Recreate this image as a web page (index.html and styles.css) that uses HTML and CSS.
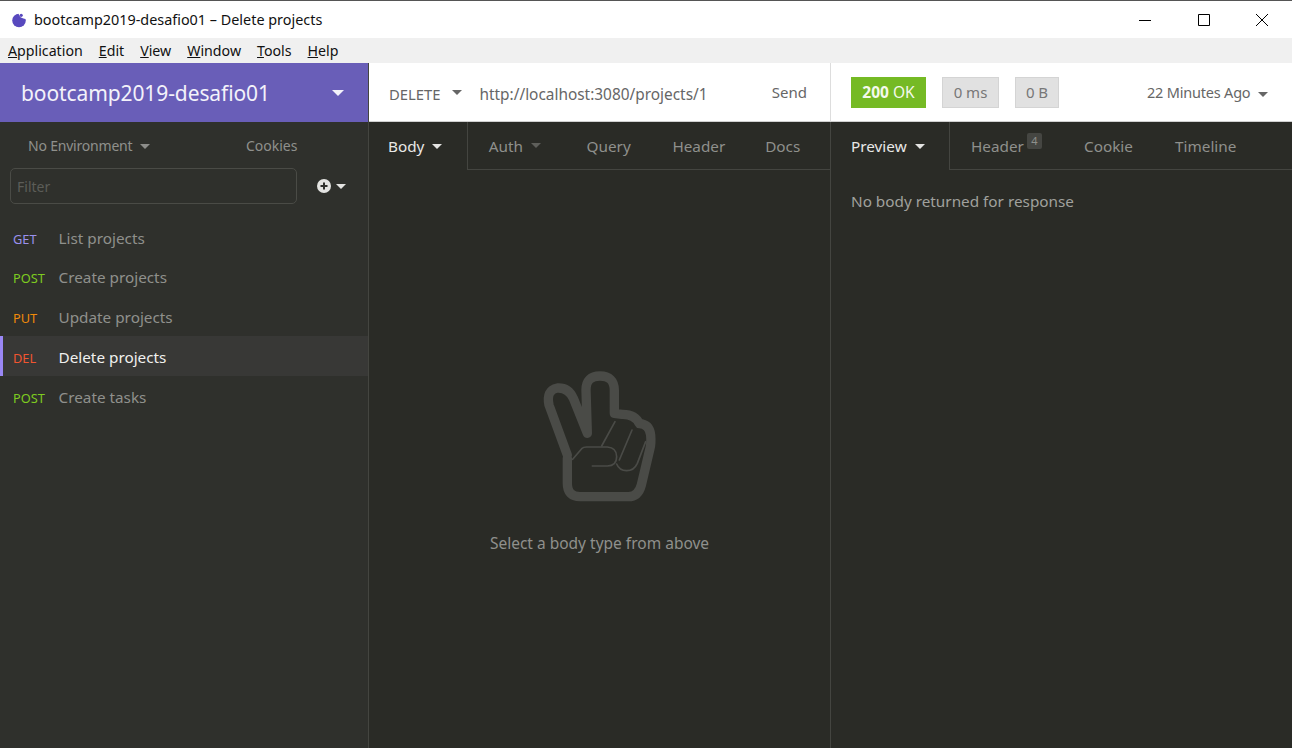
FILE: index.html
```html
<!DOCTYPE html>
<html lang="en">
<head>
<meta charset="UTF-8">
<meta name="viewport" content="width=device-width, initial-scale=1.0">
<title>bootcamp2019-desafio01 – Delete projects</title>
<link rel="stylesheet" href="styles.css">
</head>
<body>

<div class="titlebar">
  <svg class="app-logo" width="16" height="16" viewBox="0 0 16 16">
    <circle cx="8" cy="8.5" r="6.8" fill="#5849be"/>
    <path d="M7.5 1C8 4.5 10 6.5 15 7L15 1z" fill="#fff"/>
    <circle cx="10.2" cy="3.3" r="1.6" fill="#5849be"/>
  </svg>
  <span class="title-text">bootcamp2019-desafio01 – Delete projects</span>
  <div class="win-buttons">
    <svg width="12" height="12" viewBox="0 0 12 12"><path d="M0 6.5h12" stroke="#000" fill="none"/></svg>
    <svg width="12" height="12" viewBox="0 0 12 12"><path d="M.5.5h11v11H.5z" stroke="#000" fill="none"/></svg>
    <svg width="12" height="12" viewBox="0 0 12 12"><path d="M0 0l12 12M12 0L0 12" stroke="#000" fill="none"/></svg>
  </div>
</div>

<div class="menubar">
  <span><u>A</u>pplication</span>
  <span><u>E</u>dit</span>
  <span><u>V</u>iew</span>
  <span><u>W</u>indow</span>
  <span><u>T</u>ools</span>
  <span><u>H</u>elp</span>
</div>

<div class="app">
  <aside class="sidebar">
    <div class="workspace">
      <span>bootcamp2019-desafio01</span>
      <i class="caret caret-big"></i>
    </div>
    <div class="env-row">
      <span class="env">No Environment <i class="caret"></i></span>
      <span class="cookies">Cookies</span>
    </div>
    <div class="filter-row">
      <input class="filter" type="text" placeholder="Filter">
      <svg class="plus" width="14" height="14" viewBox="0 0 14 14">
        <circle cx="7" cy="7" r="7" fill="#e4e4e2"/>
        <path d="M7 3.5v7M3.5 7h7" stroke="#2f302c" stroke-width="2"/>
      </svg>
      <i class="caret caret-white"></i>
    </div>
    <ul class="requests">
      <li><b class="get">GET</b>List projects</li>
      <li><b class="post">POST</b>Create projects</li>
      <li><b class="put">PUT</b>Update projects</li>
      <li class="active"><b class="del">DEL</b>Delete projects</li>
      <li><b class="post">POST</b>Create tasks</li>
    </ul>
  </aside>

  <section class="pane pane-request">
    <div class="topbar">
      <span class="method">DELETE</span>
      <i class="caret caret-dark"></i>
      <span class="url">http://localhost:3080/projects/1</span>
      <span class="send">Send</span>
    </div>
    <div class="tabs">
      <div class="tab current">Body <i class="caret caret-white"></i></div>
      <div class="tab tab-auth">Auth <i class="caret caret-dim"></i></div>
      <div class="tab tab-query">Query</div>
      <div class="tab tab-header">Header</div>
      <div class="tab tab-docs">Docs</div>
      <div class="tab-fill"></div>
    </div>
    <div class="empty">
      <svg class="hand" width="200" height="170" viewBox="0 0 600 510" fill="none" stroke="#4a4b47" stroke-linecap="round" stroke-linejoin="round">
        <path stroke-width="28" d="M202 325L202 400Q202 440 240 440L385 440Q415 440 424 405L450 295Q454 280 452 255Q448 222 418 221Q405 192 366 193L343 190L343 120Q342 78 300 78Q258 78 258 120L262 250L220 145Q205 112 172 114Q138 120 147 165L202 315"/>
        <path stroke-width="5" d="M218 328L245 296Q250 291 260 291L322 291Q350 293 350 320Q350 347 322 348L277 348"/>
        <path stroke-width="5" d="M305 288L345 215"/>
        <path stroke-width="5" d="M358 330L396 240"/>
        <path stroke-width="5" d="M350 342Q358 362 380 362Q402 362 412 340L437 275"/>
      </svg>
      <p>Select a body type from above</p>
    </div>
  </section>

  <section class="pane pane-response">
    <div class="topbar">
      <span class="badge badge-ok"><b>200</b> OK</span>
      <span class="badge badge-ms">0 ms</span>
      <span class="badge badge-size">0 B</span>
      <span class="ago">22 Minutes Ago <i class="caret caret-dark"></i></span>
    </div>
    <div class="tabs">
      <div class="tab current tab-preview">Preview <i class="caret caret-white"></i></div>
      <div class="tab tab-resp-header">Header<sup class="count">4</sup></div>
      <div class="tab tab-cookie">Cookie</div>
      <div class="tab tab-timeline">Timeline</div>
      <div class="tab-fill"></div>
    </div>
    <p class="no-body">No body returned for response</p>
  </section>
</div>

</body>
</html>
```

FILE: styles.css
```css
* {
  box-sizing: border-box;
}

html, body {
  height: 100%;
}

body {
  margin: 0;
  font-family: "Noto Sans", Arial, sans-serif;
  font-size: 14px;
  background-color: #2a2b26;
  display: flex;
  flex-direction: column;
  overflow: hidden;
}

.titlebar {
  height: 38px;
  background-color: white;
  border-top: 1px solid #555;
  display: flex;
  align-items: center;
  padding-left: 11px;
  color: #111;
}

.title-text {
  margin-left: 7px;
  font-size: 14.4px;
}

.win-buttons {
  margin-left: auto;
  display: flex;
  gap: 46.5px;
  padding-right: 24px;
}

.win-buttons svg {
  display: block;
}

.menubar {
  height: 25px;
  background-color: #f0f0f0;
  display: flex;
  align-items: center;
  gap: 16px;
  padding-left: 8px;
  font-size: 14.2px;
  color: #111;
}

.app {
  flex: 1;
  display: flex;
  min-height: 0;
}

.sidebar {
  width: 369px;
  background-color: #2f302c;
  border-right: 1px solid #444540;
  display: flex;
  flex-direction: column;
}

.workspace {
  height: 59px;
  background-color: #695eb8;
  color: #f3f2fa;
  font-size: 21px;
  letter-spacing: -0.1px;
  display: flex;
  align-items: center;
  justify-content: space-between;
  padding: 0 24px 0 21px;
}

.caret {
  display: inline-block;
  width: 0;
  height: 0;
  border-left: 5px solid transparent;
  border-right: 5px solid transparent;
  border-top: 5px solid #8d8d8a;
  vertical-align: middle;
  margin-left: 4px;
}

.caret-big {
  border-left-width: 6px;
  border-right-width: 6px;
  border-top-width: 6px;
  border-top-color: #f3f2fa;
}

.caret-white {
  border-top-color: #e4e4e2;
}

.caret-dark {
  border-top-color: #666;
}

.caret-dim {
  border-top-color: #5e5f5a;
}

.env-row {
  height: 46px;
  display: flex;
  align-items: center;
  padding-left: 28px;
  font-size: 14px;
  color: #8f908c;
  letter-spacing: -0.2px;
}

.cookies {
  margin-left: 96px;
  letter-spacing: 0;
}

.filter-row {
  height: 36px;
  display: flex;
  align-items: center;
  padding-left: 10px;
}

.filter {
  width: 287px;
  height: 36px;
  background: transparent;
  border: 1px solid #4a4b46;
  border-radius: 5px;
  padding: 0 6px;
  font-family: inherit;
  font-size: 14px;
  color: #ccc;
}

.filter::placeholder {
  color: #5c5d58;
}

.plus {
  margin-left: 20px;
}

.filter-row .caret {
  margin-left: 5px;
}

.requests {
  list-style: none;
  margin: 12px 0 0;
  padding: 0;
}

.requests li {
  height: 40px;
  display: flex;
  align-items: center;
  padding: 2px 0 0 13px;
  font-size: 15.3px;
  color: #8f908c;
}

.requests li:first-child {
  padding-top: 4px;
}

.requests b {
  width: 45.5px;
  flex: none;
  font-weight: normal;
  font-size: 12.8px;
  padding-top: 2px;
}

.requests li.active {
  background-color: #383836;
  color: #f0f0ee;
  border-left: 3px solid #9a87f5;
  padding-left: 10px;
}

.get { color: #9a90ee; }
.post { color: #7ecb20; }
.put { color: #f08a0a; }
.del { color: #f05530; }

.pane {
  display: flex;
  flex-direction: column;
  background-color: #2a2b26;
}

.pane-request {
  width: 462px;
  border-right: 1px solid #444540;
}

.pane-response {
  flex: 1;
}

.topbar {
  height: 59px;
  background-color: white;
  border-bottom: 1px solid #d0d0d0;
  display: flex;
  align-items: center;
  color: #666;
  font-size: 15px;
}

.pane-request .topbar {
  margin-right: -1px;
  border-right: 1px solid #ddd;
  padding-left: 20px;
  position: relative;
}

.method {
  font-size: 14.8px;
  padding-top: 4px;
}

.topbar .caret {
  margin-left: 12px;
}

.url {
  margin-left: 17px;
  padding-top: 4px;
  font-size: 15.4px;
}

.send {
  margin-left: auto;
  margin-right: 23px;
}

.pane-response .topbar {
  padding-left: 20px;
  gap: 16px;
}

.badge {
  height: 31px;
  display: flex;
  align-items: center;
  justify-content: center;
  background-color: #e1e1e1;
  border: 1px solid #d4d4d4;
  color: #777;
  font-size: 15px;
}

.badge-ok {
  width: 75px;
  background-color: #75ba24;
  border-color: #75ba24;
  color: #f4f9ec;
  font-size: 15.5px;
}

.badge-ok b {
  margin-right: 4px;
}

.badge-ms {
  width: 57px;
}

.badge-size {
  width: 44px;
}

.ago {
  margin-left: auto;
  margin-right: 24px;
  font-size: 14.5px;
  letter-spacing: -0.2px;
}

.ago .caret {
  margin-left: 4px;
}

.tabs {
  height: 48px;
  display: flex;
  color: #8f908c;
  font-size: 15.3px;
}

.tab {
  height: 48px;
  display: flex;
  align-items: center;
  border-bottom: 1px solid #444540;
  padding-left: 21px;
  white-space: pre;
}

.tab .caret {
  margin-left: 4px;
}

.tab.current {
  color: #e8e8e6;
  border-bottom: none;
  border-right: 1px solid #444540;
  padding-left: 19px;
  width: 99px;
}

.tab-auth { width: 98px; }
.tab-query { width: 86px; }
.tab-header { width: 93px; }
.tab-docs { width: 86px; }

.tab-fill {
  flex: 1;
  border-bottom: 1px solid #444540;
}

.tab.tab-preview {
  width: 119px;
  padding-left: 20px;
}

.tab-resp-header { width: 113px; }
.tab-cookie { width: 91px; }
.tab-timeline { width: 100px; }

.count {
  background-color: #454642;
  border-radius: 2px;
  font-size: 11px;
  line-height: 16px;
  width: 15px;
  text-align: center;
  margin: -10px 0 0 3px;
}

.empty {
  flex: 1;
  display: flex;
  flex-direction: column;
  align-items: center;
  padding-top: 180px;
  color: #8f908c;
  font-size: 15.5px;
}

.hand {
  display: block;
}

.empty p {
  margin: 12px 0 0;
}

.no-body {
  margin: 21px 0 0 20px;
  color: #a0a19d;
  font-size: 15.3px;
}
```
